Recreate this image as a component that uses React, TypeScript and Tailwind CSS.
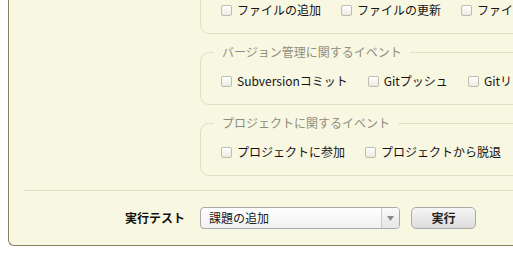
import React from "react";

const Check = ({ label }: { label: string }) => (
  <label className="flex items-center h-[16px] gap-[5px] whitespace-nowrap">
    <span className="inline-block w-[11px] h-[11px] rounded-[2px] border border-[#bdbcae] bg-linear-to-b from-white to-[#ebeae2] shrink-0" />
    <span>{label}</span>
  </label>
);

const Group = ({ legend, items }: { legend?: string; items: string[] }) => (
  <fieldset className="border border-[#e2dec0] rounded-[9px] pl-[20px] pt-0 pb-[15px] min-w-0">
    <legend className="ml-[-7px] px-[8px] h-[14px] leading-[14px] text-[12px] text-[#8f8d80]">
      {legend}
    </legend>
    <div className="flex gap-x-[20px] pt-[14px]">
      {items.map((t) => (
        <Check key={t} label={t} />
      ))}
    </div>
  </fieldset>
);

export default function App() {
  return (
    <div className="w-[513px] h-[256px] overflow-hidden bg-white font-['Noto_Sans_CJK_JP','Noto_Sans',sans-serif] text-[12px] text-[#141414]">
      <div className="ml-[8px] mt-[-26px] w-[620px] bg-[#f8f7e2] border-l border-b border-[#8c7f5f] rounded-bl-[6px]">
        <div className="pl-[191px] flex flex-col gap-[11px] w-[700px]">
          <Group legend="" items={["ファイルの追加", "ファイルの更新", "ファイル"]} />
          <Group legend="バージョン管理に関するイベント" items={["Subversionコミット", "Gitプッシュ", "Gitリ"]} />
          <Group legend="プロジェクトに関するイベント" items={["プロジェクトに参加", "プロジェクトから脱退"]} />
        </div>
        <div className="ml-[15px] mt-[14px] border-t border-[#e2dec0] pt-[16px] pb-[16px] flex items-center">
          <div className="w-[161px] text-right font-bold text-[12px] text-[#111] leading-[22px]">実行テスト</div>
          <div className="ml-[15px] w-[200px] h-[22px] rounded-[4px] border border-[#a9a9a9] bg-linear-to-b from-white to-[#f1f1f1] flex items-stretch overflow-hidden">
            <div className="flex-1 pl-[8px] leading-[20px] text-[12px] text-[#222]">課題の追加</div>
            <div className="w-[18px] border-l border-[#c9c9c9] bg-linear-to-b from-[#fafafa] to-[#e6e6e6] flex items-center justify-center">
              <svg width="7" height="5" viewBox="0 0 7 5">
                <path d="M0 0 L7 0 L3.5 5 Z" fill="#8a8a8a" />
              </svg>
            </div>
          </div>
          <button className="ml-[11px] w-[65px] h-[22px] rounded-[5px] border border-[#a9a9a9] bg-linear-to-b from-[#f6f6f6] to-[#dcdcdc] font-bold text-[12px] text-[#222] leading-[20px]">
            実行
          </button>
        </div>
      </div>
    </div>
  );
}
